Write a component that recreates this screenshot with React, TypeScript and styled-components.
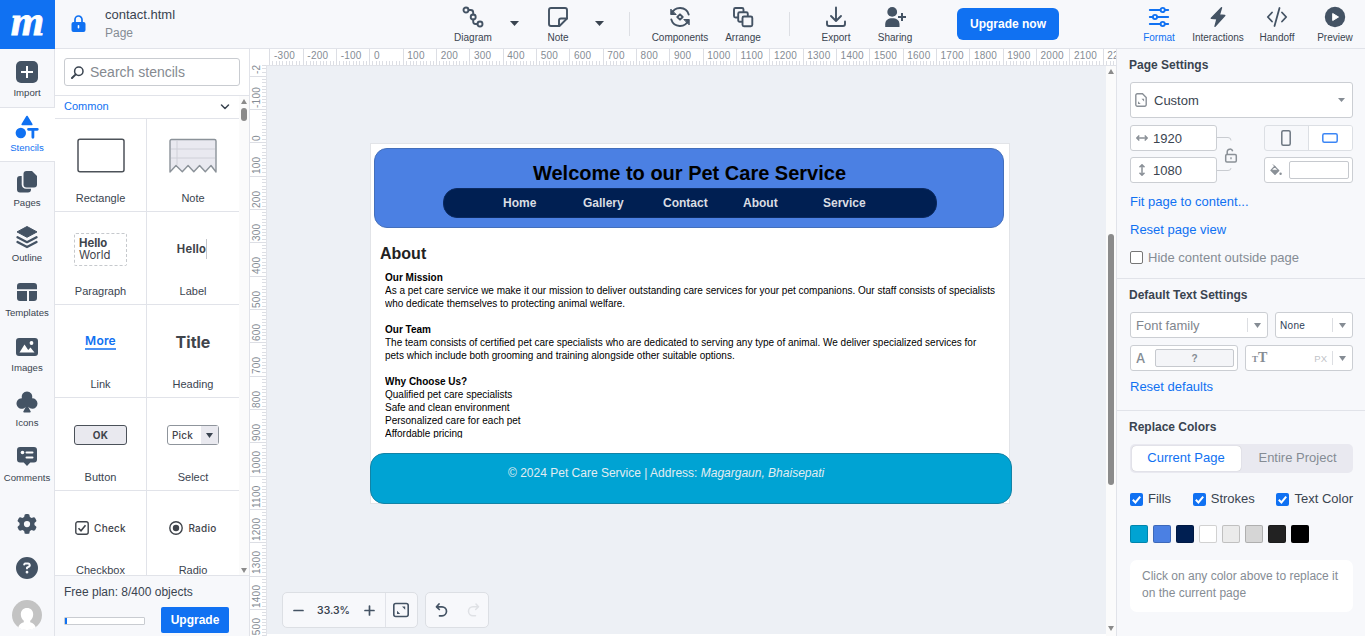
import React from "react";
import styled, { createGlobalStyle, css } from "styled-components";
import { FaCircleQuestion, FaGear } from "react-icons/fa6";
import { BsSuitClubFill } from "react-icons/bs";

const ink = "#445364";
const text = "#3a4450";
const blue = "#1071f2";
const line = "#e1e3e9";
const panel = "#f7f8fb";
const muted = "#858c94";

const GlobalStyle = createGlobalStyle`
  * { box-sizing: border-box; }
  body {
    margin: 0;
    overflow: hidden;
    background: #fff;
    font-family: "Liberation Sans", Arial, sans-serif;
    color: ${text};
  }
  svg { display: block; flex: none; }
`;

const Screen = styled.div`
  display: flex;
  flex-direction: column;
  width: 1365px;
  height: 636px;
  overflow: hidden;
`;

/* ---------- top bar ---------- */

const TopBar = styled.header`
  display: flex;
  flex: none;
  height: 49px;
  background: ${panel};
  border-bottom: 1px solid ${line};
`;

const Logo = styled.div`
  width: 55px;
  height: 49px;
  background: ${blue};
  color: #fff;
  font: italic bold 43px/42px "Liberation Serif", serif;
  text-align: center;
  -webkit-text-stroke: 0.8px #fff;
`;

const FileInfo = styled.div`
  display: flex;
  width: 393px;
  padding: 15px 0 0 16px;
`;

const FileNames = styled.div`
  margin: -9px 0 0 19px;
  font-size: 12px;
  line-height: 21px;
  color: ${muted};
`;

const FileName = styled.div`
  font-size: 13px;
  line-height: 17px;
  color: ${text};
`;

const Tool = styled.div<{ $width?: number; $gap?: number; $active?: boolean }>`
  display: flex;
  flex-direction: column;
  align-items: center;
  width: ${(p) => p.$width ?? 50}px;
  margin-left: ${(p) => p.$gap ?? 0}px;
  padding-top: 6px;
  font-size: 10px;
  line-height: 12px;
  white-space: nowrap;
  color: ${(p) => (p.$active ? blue : text)};
  svg { color: ${(p) => (p.$active ? blue : ink)}; margin-bottom: 4px; }
`;

const ToolCaret = styled.div<{ $gap: number }>`
  margin-left: ${(p) => p.$gap}px;
  padding-top: 21px;
  width: 10px;
`;

const ToolDivider = styled.div<{ $gap: number }>`
  width: 1px;
  height: 24px;
  margin: 12px 0 0 ${(p) => p.$gap}px;
  background: #dddfe4;
`;

const UpgradeNow = styled.button`
  width: 102px;
  height: 32px;
  margin: 8px 0 0 37px;
  padding: 0;
  border: 0;
  border-radius: 6px;
  background: ${blue};
  color: #fff;
  font: bold 12px "Liberation Sans", Arial, sans-serif;
`;

/* ---------- left rail ---------- */

const Body = styled.div`
  display: flex;
  flex: 1;
  min-height: 0;
`;

const Rail = styled.nav`
  display: flex;
  flex-direction: column;
  flex: none;
  width: 55px;
  padding-top: 3px;
  background: linear-gradient(${line}, ${line}) right / 1px 100% no-repeat ${panel};
`;

const RailItem = styled.div<{ $active?: boolean }>`
  display: flex;
  flex-direction: column;
  align-items: center;
  flex: none;
  width: 55px;
  height: 55px;
  padding: 8px 1px 0 0;
  font-size: 9.6px;
  line-height: 12px;
  color: ${(p) => (p.$active ? blue : text)};
  svg { color: ${(p) => (p.$active ? blue : ink)}; margin-bottom: 3px; }
  ${(p) =>
    p.$active &&
    css`
      background: #fff;
      border: solid ${line};
      border-width: 1px 0;
      padding-top: 7px;
    `}
`;

const RailButton = styled.div`
  display: flex;
  flex: none;
  align-items: center;
  justify-content: center;
  width: 54px;
  height: 44px;
  color: ${ink};
`;

const RailBottom = styled.div`
  margin-top: 10px;
  & > :last-child { height: 50px; }
`;

/* ---------- stencils ---------- */

const Stencils = styled.aside`
  display: flex;
  flex-direction: column;
  flex: none;
  width: 195px;
  background: #fff;
  border-right: 1px solid ${line};
`;

const SearchArea = styled.div`
  height: 47px;
  padding: 9px;
  border-bottom: 1px solid ${line};
`;

const SearchBox = styled.div`
  display: flex;
  align-items: center;
  gap: 6px;
  width: 176px;
  height: 28px;
  padding-left: 6px;
  border: 1px solid #c9ccd1;
  border-radius: 3px;
  font-size: 14px;
  color: #858a90;
`;

const StencilScroller = styled.div`
  display: flex;
  flex: none;
  height: 479px;
  overflow: hidden;
`;

const StencilList = styled.div`
  width: 184px;
`;

const SectionHeading = styled.div`
  display: flex;
  align-items: center;
  justify-content: space-between;
  height: 23px;
  padding: 0 9px 2px;
  border-bottom: 1px solid ${line};
  font-size: 11px;
  color: ${blue};
`;

const StencilGrid = styled.div`
  display: grid;
  grid-template-columns: 92px 92px;
  grid-auto-rows: 93px;
`;

const Stencil = styled.div`
  display: flex;
  flex-direction: column;
  align-items: center;
  border-bottom: 1px solid ${line};
  font-size: 11px;
  line-height: 14px;
  &:nth-child(odd) { border-right: 1px solid ${line}; }
`;

const Thumb = styled.div`
  display: flex;
  align-items: center;
  justify-content: center;
  height: 74px;
  margin-bottom: -2px;
  font-family: Inter, "Liberation Sans", sans-serif;
  color: #3f444b;
`;

const ParagraphThumb = styled.div`
  width: 53px;
  height: 33px;
  padding: 3px 0 0 4px;
  border: 1px dashed #c6c9cd;
  border-radius: 2px;
  font-size: 11.3px;
  line-height: 12px;
  b { display: block; }
`;

const LabelThumb = styled.div`
  height: 20px;
  margin-right: 2px;
  border-right: 1px solid #c3c6cb;
  font-size: 11.2px;
  font-weight: 700;
  line-height: 21px;
  letter-spacing: 0.3px;
`;

const LinkThumb = styled.div`
  height: 16px;
  border-bottom: 2px solid #4a92f5;
  margin-top: -1px;
  font-size: 12px;
  font-weight: 600;
  line-height: 13px;
  letter-spacing: 0.2px;
  color: ${blue};
`;

const TitleThumb = styled.div`
  font-size: 16px;
  font-weight: 700;
`;

const ButtonThumb = styled.div`
  width: 53px;
  height: 20px;
  border: 1.5px solid #4b5159;
  border-radius: 3px;
  background: #e9e9ef;
  font-size: 10px;
  font-weight: 700;
  line-height: 18px;
  text-align: center;
  letter-spacing: 0.2px;
`;

const SelectThumb = styled.div`
  display: flex;
  width: 52px;
  height: 20px;
  padding-left: 4px;
  border: 1px solid #8f959c;
  border-radius: 3px;
  font-size: 10px;
  font-weight: 500;
  line-height: 18px;
  letter-spacing: 0.2px;
`;

const SelectArrow = styled.div`
  display: flex;
  align-items: center;
  justify-content: center;
  width: 17px;
  margin-left: auto;
  background: #e9e9ef;
`;

const ChoiceThumb = styled.div`
  display: flex;
  align-items: center;
  gap: 5px;
  font-size: 10px;
  font-weight: 500;
  letter-spacing: 0.25px;
`;

const ScrollTrack = styled.div<{ $bottom: number }>`
  display: flex;
  flex-direction: column;
  align-items: center;
  flex: none;
  width: 10px;
  padding: 3px 0 ${(p) => p.$bottom}px;
  background: #fbfbfb;
`;

const ScrollThumb = styled.div<{ $offset: number; $length: number }>`
  width: 6px;
  height: ${(p) => p.$length}px;
  margin: ${(p) => p.$offset}px 0 auto;
  border-radius: 3px;
  background: #8b8b8b;
`;

const Plan = styled.div`
  flex: 1;
  padding: 9px 9px 0;
  background: ${panel};
  border-top: 1px solid ${line};
  font-size: 12px;
  line-height: 15px;
`;

const PlanRow = styled.div`
  display: flex;
  align-items: center;
  margin-top: 7px;
`;

const PlanMeter = styled.div`
  width: 81px;
  height: 8px;
  margin-top: 1px;
  border: 1px solid #c9ccd1;
  border-radius: 1px;
  background: linear-gradient(${blue}, ${blue}) left / 2px 100% no-repeat #fff;
`;

const UpgradeButton = styled.button`
  width: 68px;
  height: 26px;
  margin-left: 16px;
  padding: 0;
  border: 0;
  border-radius: 2px;
  background: ${blue};
  color: #fff;
  font: bold 12px "Liberation Sans", Arial, sans-serif;
`;

/* ---------- canvas ---------- */

const Workspace = styled.main`
  display: flex;
  flex-direction: column;
  flex: none;
  width: 866px;
`;

const tickStops = (direction: string) => {
  const at = [3, 7, 10, 13, 17, 20, 23, 27, 30];
  const stops = at.map(
    (n) => `transparent ${n}px, #dcdee4 ${n}px, #dcdee4 ${n + 1}px, transparent ${n + 1}px`
  );
  return `linear-gradient(${direction}, ${stops.join(", ")})`;
};

const TopRuler = styled.div`
  display: flex;
  flex: none;
  height: 17px;
  margin-left: 17px;
  border-bottom: 1px solid ${line};
  overflow: hidden;
`;

const TopMark = styled.div`
  flex: none;
  width: 33.3333px;
  height: 16px;
  padding-left: 3.6px;
  border-left: 1px solid #dcdee4;
  background: ${tickStops("to right")} -1px 12px / 34px 4px no-repeat;
  font-size: 10px;
  line-height: 13px;
  letter-spacing: 0.25px;
  color: ${muted};
  &:first-child { margin-left: -30.93px; }
`;

const WorkRow = styled.div`
  display: flex;
  flex: 1;
  min-height: 0;
`;

const SideRuler = styled.div`
  flex: none;
  width: 17px;
  height: 571px;
  margin-top: -1px;
  border-right: 1px solid ${line};
  overflow: hidden;
`;

const SideMark = styled.div`
  width: 16px;
  height: 33.3333px;
  padding-top: 3px;
  border-bottom: 1px solid #dcdee4;
  background: ${tickStops("to top")} 12px 0 / 4px 33px no-repeat;
  font-size: 10px;
  line-height: 11px;
  letter-spacing: 0.25px;
  color: ${muted};
  writing-mode: vertical-rl;
  span {
    display: block;
    width: 11px;
    height: 28px;
    margin-right: 4px;
    transform: rotate(180deg);
    white-space: nowrap;
  }
  &:first-child { margin-top: -21.7px; }
`;

const Canvas = styled.div`
  position: relative;
  flex: 1;
  height: 568px;
  background: #edf0f5;
`;

const Artboard = styled.div`
  position: absolute;
  left: 103px;
  top: 77px;
  width: 640px;
  height: 361px;
  border: 1px solid #e2e4e8;
  background: #fff;
  color: #000;
`;

const HeroShape = styled.div`
  position: absolute;
  left: 3px;
  top: 4px;
  width: 630px;
  height: 80px;
  padding-top: 12px;
  border: 1px solid #446fbb;
  border-radius: 13px;
  background: #4b80e3;
  text-align: center;
`;

const HeroTitle = styled.div`
  padding-left: 1px;
  font-size: 20px;
  font-weight: bold;
  line-height: 25px;
`;

const NavShape = styled.div`
  display: grid;
  grid-template-columns: repeat(5, 80px);
  width: 494px;
  height: 30px;
  margin: 2px 0 0 68px;
  padding-left: 59px;
  border: 1px solid #0b2a61;
  border-radius: 14px;
  background: #001f52;
  color: #dadde3;
  font-size: 12px;
  font-weight: bold;
  line-height: 28px;
  text-align: left;
`;

const AboutTitle = styled.div`
  position: absolute;
  left: 9px;
  top: 100px;
  color: #222;
  font-size: 16px;
  font-weight: bold;
  line-height: 20px;
`;

const AboutText = styled.div`
  position: absolute;
  left: 14px;
  top: 127px;
  width: 616px;
  height: 167px;
  overflow: hidden;
  font-size: 10px;
  line-height: 13px;
  white-space: pre;
`;

const FooterShape = styled.div`
  position: absolute;
  left: -1px;
  top: 309px;
  width: 642px;
  height: 51px;
  padding-top: 11px;
  padding-left: 137px;
  border: 1px solid #1283a6;
  border-radius: 14px;
  background: #00a3d3;
  color: #e2edf2;
  font-size: 12px;
  line-height: 16px;
  white-space: pre;
`;

const CanvasControls = styled.div`
  position: absolute;
  left: 15px;
  top: 526px;
  display: flex;
  gap: 7px;
`;

const ControlGroup = styled.div`
  display: flex;
  align-items: center;
  height: 36px;
  border: 1px solid #dcdfe4;
  border-radius: 5px;
  background: ${panel};
  color: ${text};
`;

const ZoomCell = styled.div<{ $width: number; $divided?: boolean; $faded?: boolean }>`
  display: flex;
  align-items: center;
  justify-content: center;
  width: ${(p) => p.$width}px;
  height: 34px;
  padding-right: ${(p) => (p.$divided ? 2 : 0)}px;
  border-left: ${(p) => (p.$divided ? `1px solid ${line}` : "0")};
  color: ${(p) => (p.$faded ? "#dfe1e5" : ink)};
`;

const ZoomValue = styled.div`
  width: 39px;
  text-align: center;
  font: 600 10.3px Inter, sans-serif;
`;

/* ---------- format panel ---------- */

const Format = styled.aside`
  flex: 1;
  border-left: 1px solid ${line};
  background: ${panel};
  font-size: 13px;
`;

const Section = styled.section<{ $height?: number }>`
  height: ${(p) => (p.$height ? p.$height + "px" : "auto")};
  padding: 8px 12px 0 13px;
  & + & { border-top: 1px solid ${line}; }
`;

const SectionTitle = styled.h2`
  margin: 0 0 9px -1px;
  font-size: 12px;
  line-height: 16px;
`;

const Row = styled.div<{ $top?: number }>`
  display: flex;
  justify-content: space-between;
  margin-top: ${(p) => p.$top ?? 0}px;
`;

const Field = styled.div<{ $width?: number; $height?: number; $pad?: number; $gap?: number; $muted?: boolean }>`
  display: flex;
  align-items: center;
  gap: ${(p) => p.$gap ?? 5}px;
  width: ${(p) => p.$width ?? 223}px;
  height: ${(p) => p.$height ?? 26}px;
  padding-left: ${(p) => p.$pad ?? 5}px;
  border: 1px solid #cbced3;
  border-radius: 3px;
  background: #fff;
  color: ${(p) => (p.$muted ? "#7f868e" : text)};
  svg { color: #8a9097; }
`;

const FieldCaret = styled.div<{ $divided?: boolean }>`
  display: flex;
  align-items: center;
  justify-content: center;
  width: 20px;
  height: 14px;
  margin-left: auto;
  padding-right: ${(p) => (p.$divided ? 0 : 2)}px;
  border-left: ${(p) => (p.$divided ? "1px solid #dcdee2" : "0")};
`;

const SizeFields = styled.div`
  display: flex;
  flex-direction: column;
  gap: 6px;
`;

const SizeGroup = styled.div`
  display: flex;
  align-items: center;
`;

const Orientation = styled.div`
  display: flex;
  width: 89px;
  height: 26px;
  border: 1px solid #dcdfe4;
  border-radius: 3px;
  overflow: hidden;
`;

const OrientationOption = styled.div<{ $on?: boolean }>`
  display: flex;
  align-items: center;
  justify-content: center;
  flex: 1;
  padding-right: 1px;
  background: ${(p) => (p.$on ? "#fff" : "transparent")};
  border-left: ${(p) => (p.$on ? "1px solid #dcdfe4" : "0")};
`;

const ColorWell = styled.div<{ $width: number; $gray?: boolean }>`
  width: ${(p) => p.$width}px;
  height: 18px;
  margin-left: ${(p) => (p.$gray ? 1 : 2)}px;
  border: 1px solid #c6c9ce;
  border-radius: 2px;
  background: ${(p) => (p.$gray ? "#f4f5f8" : "#fff")};
  color: ${muted};
  font-size: 10px;
  font-weight: bold;
  line-height: 17px;
  text-align: center;
`;

const SmallValue = styled.span`
  font-size: 10px;
  letter-spacing: 0.3px;
  color: #2e4057;
`;

const Unit = styled.span`
  flex: 1;
  text-align: right;
  font-size: 9.5px;
  color: #bfc3c8;
`;

const TextLink = styled.div<{ $top: number }>`
  margin-top: ${(p) => p.$top}px;
  line-height: 16px;
  color: ${blue};
`;

const CheckLabel = styled.div<{ $top?: number; $muted?: boolean }>`
  display: flex;
  align-items: center;
  gap: 5px;
  margin-top: ${(p) => p.$top ?? 0}px;
  line-height: 16px;
  white-space: nowrap;
  color: ${(p) => (p.$muted ? "#858c94" : text)};
`;

const EmptyBox = styled.div`
  width: 13px;
  height: 13px;
  margin-bottom: 1px;
  border: 1px solid #767676;
  border-radius: 2px;
  background: #fff;
`;

const Tabs = styled.div`
  display: flex;
  width: 223px;
  height: 29px;
  padding: 2px;
  border-radius: 5px;
  background: #e9e9f0;
`;

const Tab = styled.div<{ $on?: boolean }>`
  width: ${(p) => (p.$on ? 109 : 110)}px;
  padding: ${(p) => (p.$on ? "0 1px 0 0" : "0 0 0 3px")};
  border-radius: 4px;
  background: ${(p) => (p.$on ? "#fff" : "transparent")};
  box-shadow: ${(p) => (p.$on ? "0 0 1px rgba(0,0,0,.3)" : "none")};
  color: ${(p) => (p.$on ? blue : muted)};
  line-height: 24px;
  text-align: center;
`;

const Swatches = styled.div`
  display: flex;
  gap: 5px;
  margin-top: 18px;
`;

const Swatch = styled.div<{ $color: string }>`
  width: 18px;
  height: 18px;
  border: 1px solid rgba(0, 0, 0, 0.18);
  border-radius: 2px;
  background: ${(p) => p.$color};
`;

const Hint = styled.div`
  height: 52px;
  margin-top: 17px;
  padding: 8px 12px;
  border-radius: 7px;
  background: #fff;
  color: ${muted};
  font-size: 12px;
  line-height: 17px;
  white-space: nowrap;
`;

/* ---------- icons ---------- */

type IconProps = { size?: number; box?: string; sw?: number; children: React.ReactNode };

const Stroke = ({ size = 22, box = "0 0 22 22", sw = 2, children }: IconProps) => (
  <svg width={size} height={size} viewBox={box} fill="none" stroke="currentColor" strokeWidth={sw} strokeLinecap="round" strokeLinejoin="round">
    {children}
  </svg>
);

const Caret = ({ w = 8, h = 5, color = "#3a4450", up = false }) => (
  <svg width={w} height={h} viewBox="0 0 8 5" preserveAspectRatio="none">
    <path d={up ? "M4 0 8 5H0Z" : "M0 0H8L4 5Z"} fill={color} />
  </svg>
);

const LockIcon = () => (
  <svg width="15" height="17" viewBox="0 0 15 17">
    <path d="M4 8V4.500a3.500 3.500 0 0 1 7 0V8" fill="none" stroke={blue} strokeWidth="1.700" />
    <rect x=".5" y="7" width="14" height="10" rx="2" fill={blue} />
    <path d="M7.500 10.800v2" stroke="#fff" strokeWidth="1.600" strokeLinecap="round" />
  </svg>
);

const DiagramIcon = () => (
  <Stroke sw={1.9}>
    <circle cx="4" cy="4" r="2.500" />
    <circle cx="11.200" cy="11" r="2.500" />
    <circle cx="18" cy="18" r="2.500" />
    <path d="M6.500 4h2.200q2.500 0 2.500 2.500v2M11.200 13.500v2q0 2.500 2.300 2.500h2" />
  </Stroke>
);

const NoteIcon = () => (
  <Stroke sw={1.9}>
    <path d="M11.500 20H4a2 2 0 0 1-2-2V4a2 2 0 0 1 2-2h14a2 2 0 0 1 2 2v8.500L12.500 20Z" />
    <path d="M12 20v-5.500a2 2 0 0 1 2-2h6" />
  </Stroke>
);

const ComponentsIcon = () => (
  <Stroke sw={1.9}>
    <path d="M2.600 8A9 9 0 0 1 19.700 8.500M19.400 14A9 9 0 0 1 2.300 13.500" />
    <path d="M1.800 3.500v5h5ZM20.200 18.500v-5h-5Z" fill="currentColor" strokeWidth="1" />
    <path d="M11 8.300 13.700 11 11 13.700 8.300 11Z" />
  </Stroke>
);

const ArrangeIcon = () => (
  <Stroke sw={1.9}>
    <rect x="10.500" y="10.500" width="9.800" height="9.800" rx="1.500" />
    <path d="M9.500 15.800H7.700a1.500 1.500 0 0 1-1.500-1.500V7.800a1.500 1.500 0 0 1 1.500-1.500h6.600a1.500 1.500 0 0 1 1.500 1.500v1.700" />
    <path d="M5.500 11.500H3.500A1.500 1.500 0 0 1 2 10V3.500A1.500 1.500 0 0 1 3.500 2H10a1.500 1.500 0 0 1 1.500 1.500v2" />
  </Stroke>
);

const ExportIcon = () => (
  <Stroke sw={1.9}>
    <path d="M11 1.500v13M6 10l5 5 5-5M2 15.500v2.500a2 2 0 0 0 2 2h14a2 2 0 0 0 2-2v-2.500" />
  </Stroke>
);

const SharingIcon = () => (
  <svg width="22" height="22" viewBox="0 0 22 22" fill="currentColor">
    <circle cx="8.200" cy="5.900" r="4.900" />
    <path d="M1.200 21v-2.500C1.200 14 4.300 12.300 8.300 12.300s7.200 1.700 7.200 6.200V21Z" />
    <path d="M18 7v8M14 11h8" stroke="currentColor" strokeWidth="2" />
  </svg>
);

const FormatIcon = () => (
  <Stroke sw={1.9}>
    <path d="M1.800 4h10.500M17 4h3.200M1.800 11h2.700M9.500 11h10.700M1.800 18h10.500M17 18h3.200" />
    <circle cx="14.700" cy="4" r="2.100" />
    <circle cx="7" cy="11" r="2.100" />
    <circle cx="14.700" cy="18" r="2.100" />
  </Stroke>
);

const BoltIcon = () => (
  <svg width="22" height="22" viewBox="0 0 22 22" fill="currentColor" stroke="currentColor" strokeLinejoin="round" strokeWidth="1.400">
    <path d="M14.500 1.700 4.300 12.300l5.700.6-2 7.500L17.800 9.500l-5.400-.6Z" />
  </svg>
);

const HandoffIcon = () => (
  <Stroke sw={1.800}>
    <path d="M6 6.500 1.800 11 6 15.500M16 6.500 20.200 11 16 15.500M13.500 2l-5 18" />
  </Stroke>
);

const PreviewIcon = () => (
  <svg width="22" height="22" viewBox="0 0 22 22">
    <circle cx="11" cy="11" r="10.200" fill="currentColor" />
    <path d="M8.700 7.500v7l5.800-3.500Z" fill="#fff" stroke="#fff" strokeWidth="1" strokeLinejoin="round" />
  </svg>
);

const ImportIcon = () => (
  <svg width="24" height="24" viewBox="0 0 24 24">
    <rect x="1" y="1" width="22" height="22" rx="5" fill="currentColor" />
    <path d="M12 6v12M6 12h12" stroke="#fff" strokeWidth="2" />
  </svg>
);

const StencilsIcon = () => (
  <svg width="24" height="24" viewBox="0 0 24 24" fill="currentColor">
    <path d="M12 1.500 16.800 9.500H7.200Z" stroke="currentColor" strokeWidth="1.600" strokeLinejoin="round" />
    <circle cx="5.800" cy="18" r="5.200" />
    <path d="M13.500 14.300h8.800M17.900 14.300v8" stroke="currentColor" strokeWidth="2.800" strokeLinecap="round" />
  </svg>
);

const PagesIcon = () => (
  <svg width="24" height="24" viewBox="0 0 24 24" fill="currentColor">
    <path d="M11.500 1h5.500l5 5v8.500a3 3 0 0 1-3 3h-7.500a3 3 0 0 1-3-3V4a3 3 0 0 1 3-3Z" />
    <path d="M6.700 6H5a3 3 0 0 0-3 3v10.500a3 3 0 0 0 3 3h8a3 3 0 0 0 3-3v-.700h-5a4.300 4.300 0 0 1-4.300-4.300Z" />
  </svg>
);

const OutlineIcon = () => (
  <svg width="24" height="24" viewBox="0 0 24 24">
    <path d="M12 1.500 22 6.900 12 12.300 2 6.900Z" fill="currentColor" stroke="currentColor" strokeLinejoin="round" />
    <path d="m2.500 12.200 9.500 5 9.500-5M2.500 17l9.500 5 9.500-5" fill="none" stroke="currentColor" strokeWidth="2.300" strokeLinejoin="round" strokeLinecap="round" />
  </svg>
);

const TemplatesIcon = () => (
  <svg width="24" height="24" viewBox="0 0 24 24" fill="currentColor">
    <path d="M5 3h14a3 3 0 0 1 3 3v3.200H2V6a3 3 0 0 1 3-3ZM2 11h10v10H5a3 3 0 0 1-3-3ZM14 11h8v7a3 3 0 0 1-3 3h-5Z" />
  </svg>
);

const ImagesIcon = () => (
  <svg width="24" height="24" viewBox="0 0 24 24">
    <rect x="1" y="3" width="22" height="18" rx="3" fill="currentColor" />
    <path d="m4.500 17.500 5-8 3.700 5.500 2.300-2.500 4 5Z" fill="#fff" />
    <circle cx="16.500" cy="8" r="1.900" fill="#fff" />
  </svg>
);

const CommentsIcon = () => (
  <svg width="24" height="24" viewBox="0 0 24 24">
    <path d="M5 2h14a3 3 0 0 1 3 3v9.500a3 3 0 0 1-3 3h-3.700L12 21l-3.300-3.500H5a3 3 0 0 1-3-3V5a3 3 0 0 1 3-3Z" fill="currentColor" />
    <circle cx="7.500" cy="7.500" r="1.800" fill="#fff" />
    <path d="M11.500 7.500h6M11.500 12.500h6" stroke="#fff" strokeWidth="2" strokeLinecap="round" />
  </svg>
);

const Avatar = () => (
  <svg width="30" height="30" viewBox="0 0 30 30">
    <circle cx="15" cy="15" r="15" fill="#c3c3c3" />
    <path d="M15 8c3.800 0 6.200 2.600 6.200 6.300 0 2.800-1.200 5.200-3 6.400v1.500c3 1 5 2.500 5.600 5.200A15 15 0 0 1 15 30a15 15 0 0 1-8.800-2.600c.6-2.700 2.600-4.200 5.600-5.200v-1.500c-1.800-1.200-3-3.600-3-6.400C8.800 10.600 11.200 8 15 8Z" fill="#fff" />
  </svg>
);

const SearchIcon = () => (
  <svg width="13" height="13" viewBox="0 0 13 13" fill="none" stroke={text} strokeWidth="1.500" strokeLinecap="round">
    <circle cx="7.800" cy="5.200" r="4.200" />
    <path d="M4.700 8.400 1 12" strokeWidth="2" />
  </svg>
);

const RectangleThumb = () => (
  <svg width="48" height="36" viewBox="0 0 48 36">
    <rect x="1" y="1.300" width="46" height="32.500" rx="2" fill="#fff" stroke="#4d5259" strokeWidth="1.500" />
  </svg>
);

const NoteThumb = () => (
  <svg width="48" height="36" viewBox="0 0 48 36">
    <path d="M1 34V3a1.500 1.500 0 0 1 1.500-1.500h43A1.500 1.500 0 0 1 47 3v31l-5-6.500-5.700 6.200-5.700-6.200-5.800 6.200-5.700-6.200-5.800 6.200L7 27.500Z" fill="#e9e9f0" stroke="#8b9299" strokeWidth="1.400" strokeLinejoin="round" />
    <path d="M2 11h44M2 20h44M8 2v25" stroke="#cfd0d8" strokeWidth="1" />
  </svg>
);

const CheckThumb = () => (
  <svg width="14" height="14" viewBox="0 0 14 14" fill="none" stroke="#3f444b">
    <rect x=".8" y=".8" width="12.400" height="12.400" rx="2" strokeWidth="1.400" />
    <path d="m3.500 7.200 2.500 2.600 4.500-5.600" strokeWidth="1.600" />
  </svg>
);

const RadioThumb = () => (
  <svg width="14" height="14" viewBox="0 0 14 14">
    <circle cx="7" cy="7" r="6.200" fill="none" stroke="#3f444b" strokeWidth="1.400" />
    <circle cx="7" cy="7" r="3.200" fill="#3f444b" />
  </svg>
);

const PageIcon = () => (
  <svg width="12" height="14" viewBox="0 0 12 14" fill="none" stroke="currentColor" strokeWidth="1.400">
    <path d="M2.300.8H7.500l3.700 3.700v7.200a1.500 1.500 0 0 1-1.500 1.500H2.300A1.500 1.500 0 0 1 .8 11.700V2.300A1.500 1.500 0 0 1 2.300.8Z" />
    <path d="M3 8.300v2.700h2.700ZM6.500 5.800h2.600v2.700Z" fill="currentColor" stroke="none" />
  </svg>
);

const WidthArrow = ({ vertical = false }) => (
  <svg width="12" height="12" viewBox="0 0 12 12" fill="none" stroke="currentColor" strokeWidth="1.500" transform={vertical ? "rotate(90)" : undefined}>
    <path d="M.8 6h10.400M3.300 3.500.8 6l2.500 2.500M8.700 3.500 11.200 6 8.700 8.500" />
  </svg>
);

const RatioLock = () => (
  <svg width="22" height="36" viewBox="0 0 22 36" fill="none">
    <path d="M0 1.500h11q3 0 3 3M0 34.500h11q3 0 3-2.500" stroke="#c9ccd1" />
    <path d="M10.200 18.500v-2.700a2.800 2.800 0 0 1 5.500-.6" stroke="#8a9097" strokeWidth="1.500" />
    <rect x="8.700" y="18.500" width="10.600" height="7.500" rx="1.200" stroke="#8a9097" strokeWidth="1.500" />
    <path d="M14 21.200v2" stroke="#8a9097" strokeWidth="1.300" />
  </svg>
);

const BucketIcon = () => (
  <svg width="12" height="12" viewBox="0 0 12 12">
    <path d="M4.600 2.400 8.800 6.600 5 10.200 1 6.400Z" fill="#fff" stroke="currentColor" strokeWidth="1.300" strokeLinejoin="round" />
    <path d="M1.200 6.300h7.400L5 10.200ZM3 .5l2.400 2.400" fill="currentColor" stroke="currentColor" />
    <circle cx="10.600" cy="9.800" r="1.200" fill="currentColor" />
  </svg>
);

const Ticked = () => (
  <svg width="13" height="13" viewBox="0 0 13 13">
    <rect width="13" height="13" rx="2" fill={blue} />
    <path d="m2.800 6.800 2.600 2.600 4.800-5.800" fill="none" stroke="#fff" strokeWidth="2" />
  </svg>
);

const LetterIcon = styled.span`
  width: 13px;
  color: ${muted};
  font-size: 13px;
  font-family: Inter, sans-serif;
  font-weight: 500;
`;

const SizeIcon = styled.span`
  padding-left: 1px;
  color: ${muted};
  font: bold 14px "Liberation Serif", serif;
  small { font-size: 9px; }
`;

/* ---------- data ---------- */

const railItems: [string, React.ReactNode][] = [
  ["Import", <ImportIcon />],
  ["Stencils", <StencilsIcon />],
  ["Pages", <PagesIcon />],
  ["Outline", <OutlineIcon />],
  ["Templates", <TemplatesIcon />],
  ["Images", <ImagesIcon />],
  ["Icons", <BsSuitClubFill size={24} />],
  ["Comments", <CommentsIcon />],
];

const stencils: [string, React.ReactNode][] = [
  ["Rectangle", <RectangleThumb />],
  ["Note", <NoteThumb />],
  ["Paragraph", <ParagraphThumb><b>Hello</b>World</ParagraphThumb>],
  ["Label", <LabelThumb>Hello</LabelThumb>],
  ["Link", <LinkThumb>More</LinkThumb>],
  ["Heading", <TitleThumb>Title</TitleThumb>],
  ["Button", <ButtonThumb>OK</ButtonThumb>],
  ["Select", <SelectThumb>Pick<SelectArrow><Caret w={7} h={5} /></SelectArrow></SelectThumb>],
  ["Checkbox", <ChoiceThumb><CheckThumb />Check</ChoiceThumb>],
  ["Radio", <ChoiceThumb><RadioThumb />Radio</ChoiceThumb>],
];

const topMarks = Array.from({ length: 27 }, (_, i) => (i - 4) * 100);
const sideMarks = Array.from({ length: 18 }, (_, i) => (i - 2) * 100);
const swatches = ["#00a3d3", "#4b80e3", "#001f52", "#ffffff", "#ebebeb", "#d6d6d6", "#222222", "#000000"];

export default function App() {
  return (
    <Screen>
      <GlobalStyle />
      <TopBar>
        <Logo>m</Logo>
        <FileInfo>
          <LockIcon />
          <FileNames>
            <FileName>contact.html</FileName>
            Page
          </FileNames>
        </FileInfo>
        <Tool><DiagramIcon />Diagram</Tool>
        <ToolCaret $gap={12}><Caret w={9} h={5} /></ToolCaret>
        <Tool $gap={13}><NoteIcon />Note</Tool>
        <ToolCaret $gap={12}><Caret w={9} h={5} /></ToolCaret>
        <ToolDivider $gap={24} />
        <Tool $width={60} $gap={20}><ComponentsIcon />Components</Tool>
        <Tool $gap={8}><ArrangeIcon />Arrange</Tool>
        <ToolDivider $gap={21} />
        <Tool $gap={21}><ExportIcon />Export</Tool>
        <Tool $gap={9}><SharingIcon />Sharing</Tool>
        <UpgradeNow>Upgrade now</UpgradeNow>
        <Tool $gap={75} $active><FormatIcon />Format</Tool>
        <Tool $gap={6} $width={56}><BoltIcon />Interactions</Tool>
        <Tool $gap={6}><HandoffIcon />Handoff</Tool>
        <Tool $gap={8}><PreviewIcon />Preview</Tool>
      </TopBar>

      <Body>
        <Rail>
          {railItems.map(([name, icon]) => (
            <RailItem key={name} $active={name === "Stencils"}>{icon}{name}</RailItem>
          ))}
          <RailBottom>
            <RailButton><FaGear size={20} /></RailButton>
            <RailButton><FaCircleQuestion size={22} /></RailButton>
            <RailButton><Avatar /></RailButton>
          </RailBottom>
        </Rail>

        <Stencils>
          <SearchArea>
            <SearchBox><SearchIcon />Search stencils</SearchBox>
          </SearchArea>
          <StencilScroller>
            <StencilList>
              <SectionHeading>
                Common
                <Stroke size={10} box="0 0 10 10" sw={1.5}><path d="m1.500 4 3.500 3.500L8.500 4" stroke={text} /></Stroke>
              </SectionHeading>
              <StencilGrid>
                {stencils.map(([name, art]) => (
                  <Stencil key={name}><Thumb>{art}</Thumb>{name}</Stencil>
                ))}
              </StencilGrid>
            </StencilList>
            <ScrollTrack $bottom={2}>
              <Caret w={6} h={5} color="#8b8b8b" up />
              <ScrollThumb $offset={4} $length={13} />
              <Caret w={6} h={5} color="#8b8b8b" />
            </ScrollTrack>
          </StencilScroller>
          <Plan>
            Free plan: 8/400 objects
            <PlanRow>
              <PlanMeter />
              <UpgradeButton>Upgrade</UpgradeButton>
            </PlanRow>
          </Plan>
        </Stencils>

        <Workspace>
          <TopRuler>
            {topMarks.map((n) => <TopMark key={n}>{n}</TopMark>)}
          </TopRuler>
          <WorkRow>
            <SideRuler>
              {sideMarks.map((n) => <SideMark key={n}><span>{n}</span></SideMark>)}
            </SideRuler>
            <Canvas>
              <Artboard>
                <HeroShape>
                  <HeroTitle>Welcome to our Pet Care Service</HeroTitle>
                  <NavShape>
                    <span>Home</span><span>Gallery</span><span>Contact</span><span>About</span><span>Service</span>
                  </NavShape>
                </HeroShape>
                <AboutTitle>About</AboutTitle>
                <AboutText>
                  <b>Our Mission</b>{"\n"}
                  {"As a pet care service we make it our mission to deliver outstanding care services for your pet companions. Our staff consists of specialists\n"}
                  {"who dedicate themselves to protecting animal welfare.\n\n"}
                  <b>Our Team</b>{"\n"}
                  {"The team consists of certified pet care specialists who are dedicated to serving any type of animal. We deliver specialized services for\n"}
                  {"pets which include both grooming and training alongside other suitable options.\n\n"}
                  <b>Why Choose Us?</b>{"\n"}
                  {"Qualified pet care specialists\nSafe and clean environment\nPersonalized care for each pet\nAffordable pricing"}
                </AboutText>
                <FooterShape>© 2024 Pet Care Service | Address: <i>Magargaun, Bhaisepati</i></FooterShape>
              </Artboard>
              <CanvasControls>
                <ControlGroup>
                  <ZoomCell $width={31}><Stroke size={11} box="0 0 11 11" sw={1.7}><path d="M1 5.500h9" /></Stroke></ZoomCell>
                  <ZoomValue>33.3%</ZoomValue>
                  <ZoomCell $width={32}><Stroke size={11} box="0 0 11 11" sw={1.7}><path d="M1 5.500h9M5.500 1v9" /></Stroke></ZoomCell>
                  <ZoomCell $width={32} $divided>
                    <Stroke size={16} box="0 0 16 16" sw={1.6}>
                      <rect x=".8" y="1.500" width="14.400" height="13" rx="2" />
                      <path d="M4 8.800V12h3.200ZM9 4.500h3.200v3.200Z" fill="currentColor" stroke="none" />
                    </Stroke>
                  </ZoomCell>
                </ControlGroup>
                <ControlGroup>
                  <ZoomCell $width={31}>
                    <Stroke size={14} box="0 0 14 14" sw={1.7}><path d="M4 1 1.500 3.800l2.800 2.700M1.800 3.800H7a4.500 4.500 0 0 1 0 9H4.500" /></Stroke>
                  </ZoomCell>
                  <ZoomCell $width={31} $faded>
                    <Stroke size={14} box="0 0 14 14" sw={1.5}><path d="m10 1 2.500 2.800-2.800 2.700M12.200 3.800H7a4.500 4.500 0 0 0 0 9h2.500" /></Stroke>
                  </ZoomCell>
                </ControlGroup>
              </CanvasControls>
            </Canvas>
            <ScrollTrack $bottom={5}>
              <Caret w={6} h={5} color="#8b8b8b" up />
              <ScrollThumb $offset={160} $length={251} />
              <Caret w={6} h={5} color="#8b8b8b" />
            </ScrollTrack>
          </WorkRow>
        </Workspace>

        <Format>
          <Section $height={229}>
            <SectionTitle>Page Settings</SectionTitle>
            <Field $height={36} $gap={7} $pad={4}><PageIcon />Custom<FieldCaret><Caret w={7} h={4} color="#858c94" /></FieldCaret></Field>
            <Row $top={7}>
              <SizeGroup>
                <SizeFields>
                  <Field $width={87}><WidthArrow />1920</Field>
                  <Field $width={87}><WidthArrow vertical />1080</Field>
                </SizeFields>
                <RatioLock />
              </SizeGroup>
              <SizeFields>
                <Orientation>
                  <OrientationOption>
                    <svg width="10" height="16" viewBox="0 0 10 16"><rect x=".8" y=".8" width="8.400" height="14.400" rx="1.500" fill="none" stroke="#6d7782" strokeWidth="1.500" /></svg>
                  </OrientationOption>
                  <OrientationOption $on>
                    <svg width="16" height="10" viewBox="0 0 16 10"><rect x=".8" y=".8" width="14.400" height="8.400" rx="1.500" fill="none" stroke="#3c86f5" strokeWidth="1.500" /></svg>
                  </OrientationOption>
                </Orientation>
                <Field $width={89}><BucketIcon /><ColorWell $width={60} /></Field>
              </SizeFields>
            </Row>
            <TextLink $top={11}>Fit page to content...</TextLink>
            <TextLink $top={12}>Reset page view</TextLink>
            <CheckLabel $top={12} $muted><EmptyBox />Hide content outside page</CheckLabel>
          </Section>
          <Section $height={132}>
            <SectionTitle>Default Text Settings</SectionTitle>
            <Row>
              <Field $width={138} $muted>Font family<FieldCaret $divided><Caret w={7} h={5} color="#858c94" /></FieldCaret></Field>
              <Field $width={78} $pad={4}><SmallValue>None</SmallValue><FieldCaret $divided><Caret w={7} h={5} color="#858c94" /></FieldCaret></Field>
            </Row>
            <Row $top={7}>
              <Field $width={108}><LetterIcon>A</LetterIcon><ColorWell $width={79} $gray>?</ColorWell></Field>
              <Field $width={108}><SizeIcon><small>T</small>T</SizeIcon><Unit>PX</Unit><FieldCaret $divided><Caret w={7} h={5} color="#858c94" /></FieldCaret></Field>
            </Row>
            <TextLink $top={8}>Reset defaults</TextLink>
          </Section>
          <Section>
            <SectionTitle>Replace Colors</SectionTitle>
            <Tabs><Tab $on>Current Page</Tab><Tab>Entire Project</Tab></Tabs>
            <Row $top={18}>
              <CheckLabel><Ticked />Fills</CheckLabel>
              <CheckLabel><Ticked />Strokes</CheckLabel>
              <CheckLabel><Ticked />Text Color</CheckLabel>
            </Row>
            <Swatches>
              {swatches.map((c) => <Swatch key={c} $color={c} />)}
            </Swatches>
            <Hint>Click on any color above to replace it<br />on the current page</Hint>
          </Section>
        </Format>
      </Body>
    </Screen>
  );
}
